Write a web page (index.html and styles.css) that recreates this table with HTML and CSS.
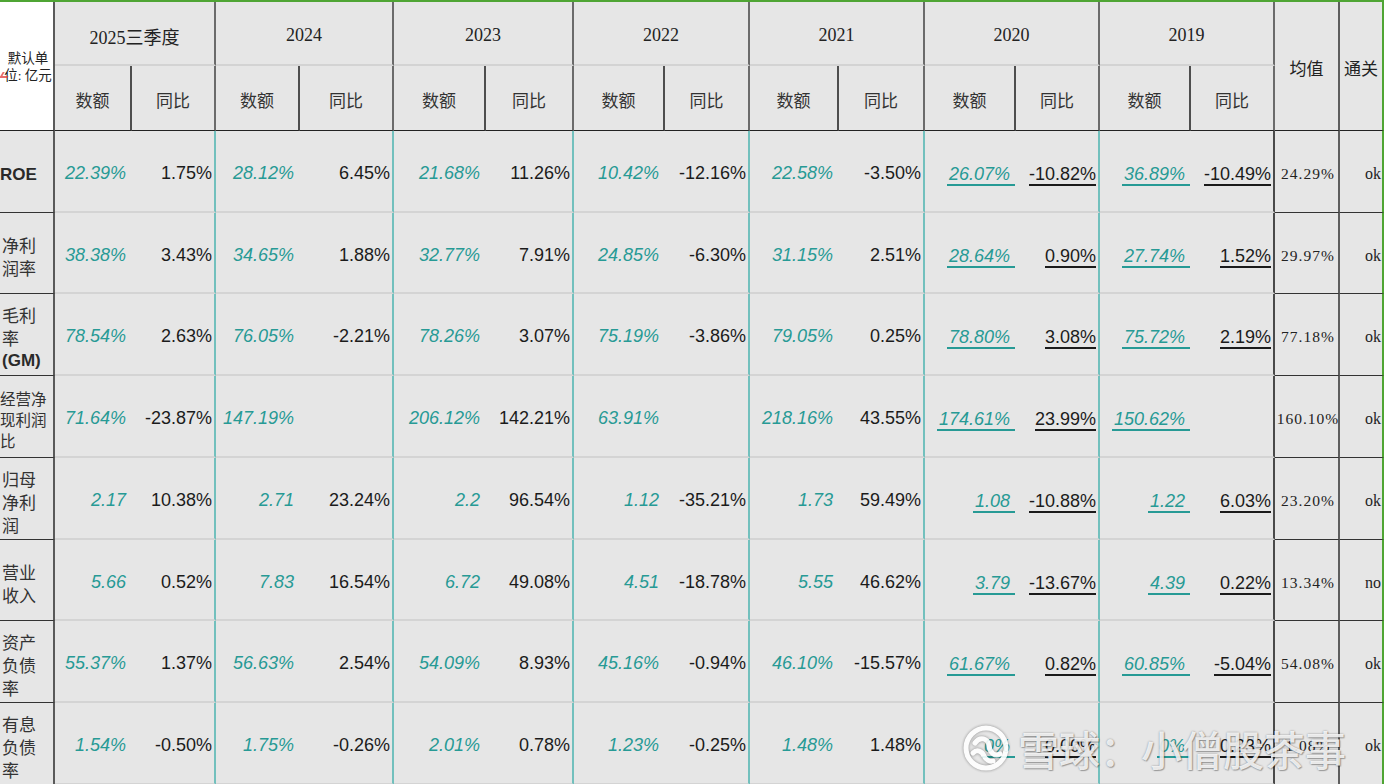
FILE: index.html
```html
<!DOCTYPE html>
<html lang="zh-CN">
<head>
<meta charset="utf-8">
<title>财务指标</title>
<link rel="stylesheet" href="styles.css">
</head>
<body>
<div class="sheet">
  <div class="corner"><div class="unit"><span>默认单</span><span>位: 亿元</span></div><i class="mark"></i></div>
  <div class="yr y1">2025三季度</div>
  <div class="yr y2">2024</div>
  <div class="yr y3">2023</div>
  <div class="yr y4">2022</div>
  <div class="yr y5">2021</div>
  <div class="yr y6">2020</div>
  <div class="yr y7">2019</div>
  <div class="hd-avg">均值</div>
  <div class="hd-pass">通关</div>
  <div class="sub s-amt">数额</div><div class="sub s-yoy">同比</div>
  <div class="sub s-amt">数额</div><div class="sub s-yoy">同比</div>
  <div class="sub s-amt">数额</div><div class="sub s-yoy">同比</div>
  <div class="sub s-amt">数额</div><div class="sub s-yoy">同比</div>
  <div class="sub s-amt">数额</div><div class="sub s-yoy">同比</div>
  <div class="sub s-amt">数额</div><div class="sub s-yoy">同比</div>
  <div class="sub s-amt">数额</div><div class="sub s-yoy">同比</div>

  <!-- ROE -->
  <div class="lbl"><b class="en">ROE</b></div>
  <div class="amt">22.39%</div><div class="yoy">1.75%</div>
  <div class="amt">28.12%</div><div class="yoy">6.45%</div>
  <div class="amt">21.68%</div><div class="yoy">11.26%</div>
  <div class="amt">10.42%</div><div class="yoy">-12.16%</div>
  <div class="amt">22.58%</div><div class="yoy">-3.50%</div>
  <div class="amt"><span class="u ut">26.07%</span></div><div class="yoy"><span class="u">-10.82%</span></div>
  <div class="amt"><span class="u ut">36.89%</span></div><div class="yoy last"><span class="u">-10.49%</span></div>
  <div class="avg">24.29%</div><div class="pass">ok</div>

  <!-- 净利润率 -->
  <div class="lbl">净利<br>润率</div>
  <div class="amt">38.38%</div><div class="yoy">3.43%</div>
  <div class="amt">34.65%</div><div class="yoy">1.88%</div>
  <div class="amt">32.77%</div><div class="yoy">7.91%</div>
  <div class="amt">24.85%</div><div class="yoy">-6.30%</div>
  <div class="amt">31.15%</div><div class="yoy">2.51%</div>
  <div class="amt"><span class="u ut">28.64%</span></div><div class="yoy"><span class="u">0.90%</span></div>
  <div class="amt"><span class="u ut">27.74%</span></div><div class="yoy last"><span class="u">1.52%</span></div>
  <div class="avg">29.97%</div><div class="pass">ok</div>

  <!-- 毛利率 -->
  <div class="lbl">毛利<br>率<br><b class="en">(GM)</b></div>
  <div class="amt">78.54%</div><div class="yoy">2.63%</div>
  <div class="amt">76.05%</div><div class="yoy">-2.21%</div>
  <div class="amt">78.26%</div><div class="yoy">3.07%</div>
  <div class="amt">75.19%</div><div class="yoy">-3.86%</div>
  <div class="amt">79.05%</div><div class="yoy">0.25%</div>
  <div class="amt"><span class="u ut">78.80%</span></div><div class="yoy"><span class="u">3.08%</span></div>
  <div class="amt"><span class="u ut">75.72%</span></div><div class="yoy last"><span class="u">2.19%</span></div>
  <div class="avg">77.18%</div><div class="pass">ok</div>

  <!-- 经营净现利润比 -->
  <div class="lbl sm">经营净<br>现利润<br>比</div>
  <div class="amt">71.64%</div><div class="yoy">-23.87%</div>
  <div class="amt">147.19%</div><div class="yoy"></div>
  <div class="amt">206.12%</div><div class="yoy">142.21%</div>
  <div class="amt">63.91%</div><div class="yoy"></div>
  <div class="amt">218.16%</div><div class="yoy">43.55%</div>
  <div class="amt"><span class="u ut">174.61%</span></div><div class="yoy"><span class="u">23.99%</span></div>
  <div class="amt"><span class="u ut">150.62%</span></div><div class="yoy last"></div>
  <div class="avg">160.10%</div><div class="pass">ok</div>

  <!-- 归母净利润 -->
  <div class="lbl">归母<br>净利<br>润</div>
  <div class="amt">2.17</div><div class="yoy">10.38%</div>
  <div class="amt">2.71</div><div class="yoy">23.24%</div>
  <div class="amt">2.2</div><div class="yoy">96.54%</div>
  <div class="amt">1.12</div><div class="yoy">-35.21%</div>
  <div class="amt">1.73</div><div class="yoy">59.49%</div>
  <div class="amt"><span class="u ut">1.08</span></div><div class="yoy"><span class="u">-10.88%</span></div>
  <div class="amt"><span class="u ut">1.22</span></div><div class="yoy last"><span class="u">6.03%</span></div>
  <div class="avg">23.20%</div><div class="pass">ok</div>

  <!-- 营业收入 -->
  <div class="lbl">营业<br>收入</div>
  <div class="amt">5.66</div><div class="yoy">0.52%</div>
  <div class="amt">7.83</div><div class="yoy">16.54%</div>
  <div class="amt">6.72</div><div class="yoy">49.08%</div>
  <div class="amt">4.51</div><div class="yoy">-18.78%</div>
  <div class="amt">5.55</div><div class="yoy">46.62%</div>
  <div class="amt"><span class="u ut">3.79</span></div><div class="yoy"><span class="u">-13.67%</span></div>
  <div class="amt"><span class="u ut">4.39</span></div><div class="yoy last"><span class="u">0.22%</span></div>
  <div class="avg">13.34%</div><div class="pass">no</div>

  <!-- 资产负债率 -->
  <div class="lbl">资产<br>负债<br>率</div>
  <div class="amt">55.37%</div><div class="yoy">1.37%</div>
  <div class="amt">56.63%</div><div class="yoy">2.54%</div>
  <div class="amt">54.09%</div><div class="yoy">8.93%</div>
  <div class="amt">45.16%</div><div class="yoy">-0.94%</div>
  <div class="amt">46.10%</div><div class="yoy">-15.57%</div>
  <div class="amt"><span class="u ut">61.67%</span></div><div class="yoy"><span class="u">0.82%</span></div>
  <div class="amt"><span class="u ut">60.85%</span></div><div class="yoy last"><span class="u">-5.04%</span></div>
  <div class="avg">54.08%</div><div class="pass">ok</div>

  <!-- 有息负债率 -->
  <div class="lbl">有息<br>负债<br>率</div>
  <div class="amt">1.54%</div><div class="yoy">-0.50%</div>
  <div class="amt">1.75%</div><div class="yoy">-0.26%</div>
  <div class="amt">2.01%</div><div class="yoy">0.78%</div>
  <div class="amt">1.23%</div><div class="yoy">-0.25%</div>
  <div class="amt">1.48%</div><div class="yoy">1.48%</div>
  <div class="amt"><span class="u ut">0%</span></div><div class="yoy"><span class="u">0.00%</span></div>
  <div class="amt"><span class="u ut">0%</span></div><div class="yoy last"><span class="u">0.23%</span></div>
  <div class="avg">1.08%</div><div class="pass">ok</div>

  <div class="watermark">
    <svg class="wm-logo" width="48" height="48" viewBox="0 0 48 48" aria-hidden="true">
      <circle cx="24" cy="24" r="20" fill="none" stroke="#fff" stroke-width="5"/>
      <path d="M13 19 C 18 12, 26 14, 27 22 C 28 29, 33 33, 38 30" fill="none" stroke="#fff" stroke-width="5" stroke-linecap="round"/>
      <path d="M11 29 C 15 25, 20 27, 22 32 C 24 36, 28 38, 31 37" fill="none" stroke="#fff" stroke-width="5" stroke-linecap="round"/>
    </svg>
    <span class="wm-text">雪球：小僧股茶事</span>
  </div>
</div>
</body>
</html>
```

FILE: styles.css
```css
html, body {
  margin: 0;
  padding: 0;
  overflow: hidden;
  background: #ffffff;
}

.sheet {
  position: relative;
  display: grid;
  grid-template-columns: 55px 77px 84px 84px 94px 92px 88px 91px 85px 89px 86px 91px 84px 91px 84px 65px 44px;
  grid-template-rows: 64px 65px 82px 81px 82px 82px 82px 81px 82px 82px;
  width: 1384px;
  border-top: 2px solid #4fa534;
  font-family: "Liberation Sans", Arial, sans-serif;
  color: #1b1b1b;
}

.sheet > div {
  box-sizing: border-box;
  background: #e6e6e6;
  display: flex;
  align-items: center;
  min-width: 0;
  overflow: hidden;
}

/* ---------- header ---------- */
.corner {
  grid-row: 1 / 3;
  grid-column: 1;
  position: relative;
  background: #ffffff !important;
  border-right: 2px solid #5a5a5a;
  border-bottom: 1px solid #222;
  justify-content: center;
}
.unit {
  display: flex;
  flex-direction: column;
  align-items: center;
  font-family: "Liberation Serif", "Noto Sans CJK SC", serif;
  font-size: 13.5px;
  line-height: 17px;
  color: #222;
  white-space: nowrap;
  margin-top: 2px;
  margin-left: 3px;
}
.mark {
  position: absolute;
  left: 1px;
  top: 70px;
  width: 6px;
  height: 4px;
  border-bottom: 2px solid #e03a3a;
  border-left: 2px solid #e03a3a;
  transform: skewX(-30deg);
  opacity: 0.75;
}

.yr {
  grid-column: span 2;
  justify-content: center;
  font-family: "Liberation Serif", "Noto Sans CJK SC", serif;
  font-size: 18px;
  color: #222;
  padding-top: 5px;
  border-right: 2px solid #6b6b6b;
  border-bottom: 2px solid #d3d3d3;
}
.yr.y1 { grid-column: 2 / 4; }

.hd-avg, .hd-pass {
  grid-row: 1 / 3;
  justify-content: center;
  font-family: "Noto Sans CJK SC", sans-serif;
  font-size: 17px;
  color: #222;
  border-bottom: 1px solid #222;
  padding-top: 2px;
}
.hd-avg {
  grid-column: 16;
  border-right: 2px solid #5e5e5e;
}
.hd-pass {
  grid-column: 17;
  border-right: 2px solid #4fa534;
  justify-content: flex-start;
  padding-left: 4px;
  white-space: nowrap;
}

.sub {
  justify-content: center;
  font-family: "Noto Sans CJK SC", sans-serif;
  font-size: 17px;
  color: #333;
  border-bottom: 1px solid #222;
  padding-top: 2px;
}
.s-amt { border-right: 2px solid #4e4e4e; }
.s-yoy { border-right: 2px solid #6b6b6b; }

/* ---------- data ---------- */
.lbl {
  flex-direction: column;
  align-items: flex-start !important;
  justify-content: center;
  font-family: "Noto Sans CJK SC", sans-serif;
  font-size: 17px;
  line-height: 23px;
  color: #333;
  padding-left: 2px;
  padding-top: 5px;
  border-right: 2px solid #5a5a5a;
  border-bottom: 1px solid #333;
  white-space: nowrap;
}
.lbl.sm {
  font-size: 15.5px;
  line-height: 21px;
  padding-left: 0;
}
.lbl .en {
  font-family: "Liberation Sans", Arial, sans-serif;
  font-weight: 700;
  font-size: 17px;
  color: #2a2a2a;
}
.lbl > .en:only-child {
  margin-left: -2px;
}

.amt, .yoy {
  justify-content: flex-end;
  font-size: 18px;
  white-space: nowrap;
  padding-top: 5px;
  border-bottom: 2px solid #d4d4d4;
}
.amt {
  color: #279a95;
  font-style: italic;
  padding-right: 6px;
}
.yoy {
  color: #1b1b1b;
  padding-right: 2px;
  border-right: 2px solid #72c0bd;
}
.yoy.last {
  border-right: 2px solid #4a4a4a;
}

.u {
  border-bottom: 2px solid currentColor;
  line-height: 18px;
  padding-bottom: 1px;
  margin-top: 4px;
}
.u.ut {
  padding-left: 2px;
  padding-right: 5px;
  margin-right: -5px;
}

.avg {
  justify-content: center;
  font-family: "Liberation Serif", serif;
  font-size: 15.5px;
  letter-spacing: 1px;
  color: #222;
  padding-top: 5px;
  padding-left: 3px;
  border-right: 2px solid #5e5e5e;
  border-bottom: 1px solid #333;
  white-space: nowrap;
}
.pass {
  justify-content: flex-end;
  font-family: "Liberation Serif", serif;
  font-size: 16px;
  color: #222;
  padding-top: 5px;
  padding-right: 1px;
  border-right: 2px solid #4fa534;
  border-bottom: 1px solid #333;
}

/* ---------- watermark ---------- */
.watermark {
  position: absolute;
  left: 962px;
  top: 718px;
  display: flex;
  align-items: center;
  gap: 8px;
  pointer-events: none;
  background: transparent !important;
  overflow: visible !important;
}
.wm-logo {
  filter: drop-shadow(0 0 1.5px rgba(0, 0, 0, 0.45));
  opacity: 0.9;
}
.wm-text {
  font-family: "Noto Sans CJK SC", sans-serif;
  font-size: 41px;
  font-weight: 500;
  line-height: 56px;
  color: rgba(255, 255, 255, 0.85);
  text-shadow: 0 0 2px rgba(0, 0, 0, 0.4), 1px 1px 1px rgba(0, 0, 0, 0.25);
  white-space: nowrap;
}
```
